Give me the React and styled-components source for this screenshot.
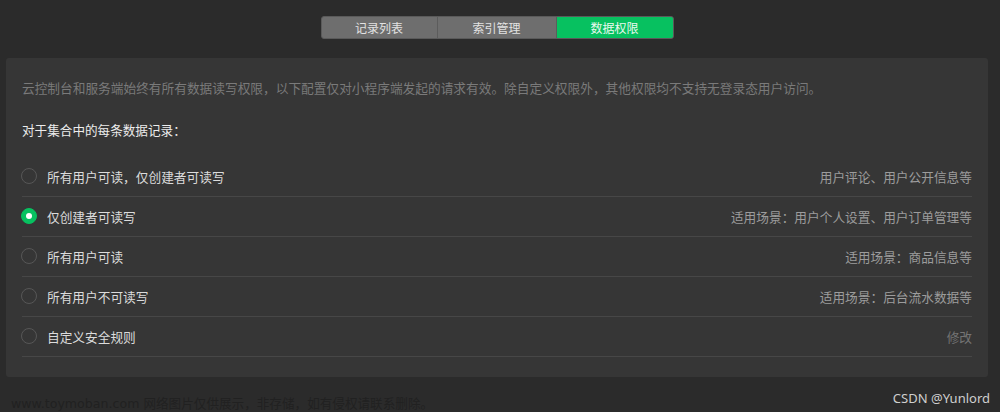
import React, { useState } from 'react'
import styled, { createGlobalStyle } from 'styled-components'

const GlobalStyle = createGlobalStyle`
  html, body {
    margin: 0;
    padding: 0;
    background: #2b2b2b;
  }
  body {
    font-family: "Noto Sans CJK SC", "Noto Sans", sans-serif;
  }
`

const Page = styled.div`
  width: 1000px;
  height: 412px;
  box-sizing: border-box;
  padding: 16px 12px 0 6px;
  display: flex;
  flex-direction: column;
  align-items: center;
  overflow: hidden;
`

const Tabs = styled.div`
  display: flex;
  height: 23px;
  box-sizing: border-box;
  border: 1px solid #5a5a5a;
  border-radius: 3px;
  background: #6e6e6e;
  overflow: hidden;
`

const Tab = styled.div`
  width: ${(props) => props.width}px;
  display: flex;
  align-items: center;
  justify-content: center;
  font-size: 12px;
  color: ${(props) => (props.active ? '#e9f9ef' : '#e2e2e2')};
  background: ${(props) => (props.active ? '#07c160' : 'transparent')};
  & + & {
    border-left: 1px solid #5c5c5c;
  }
`

const Panel = styled.div`
  align-self: stretch;
  margin-top: 19px;
  background: #363636;
  border-radius: 3px;
  padding: 20px 16px 20px 16px;
`

const Notice = styled.p`
  margin: 0;
  font-size: 12.7px;
  line-height: 20px;
  color: #7a7a7a;
`

const Heading = styled.h4`
  margin: 22px 0 17px;
  font-size: 12.6px;
  line-height: 20px;
  font-weight: normal;
  color: #ececec;
`

const Row = styled.label`
  height: 40px;
  box-sizing: border-box;
  border-bottom: 1px solid #474747;
  display: flex;
  align-items: center;
  padding-bottom: 1px;
  cursor: pointer;
`

const Radio = styled.span`
  width: 16px;
  height: 16px;
  box-sizing: border-box;
  border-radius: 50%;
  margin-left: -1px;
  border: 1px solid ${(props) => (props.checked ? '#07c160' : '#575757')};
  background: ${(props) => (props.checked ? '#07c160' : 'transparent')};
  display: flex;
  align-items: center;
  justify-content: center;
  &::after {
    content: '';
    width: 6px;
    height: 6px;
    border-radius: 50%;
    background: #fff;
    display: ${(props) => (props.checked ? 'block' : 'none')};
  }
`

const Label = styled.span`
  margin-left: 10px;
  flex: 1;
  font-size: 12.7px;
  color: #dcdcdc;
`

const Hint = styled.span`
  font-size: 12.7px;
  color: ${(props) => (props.link ? '#747474' : '#9c9c9c')};
`

const Footer = styled.div`
  align-self: stretch;
  display: flex;
  justify-content: space-between;
  margin: 11px -2px 0 5px;
`

const Watermark = styled.span`
  margin-top: 5px;
  font-family: "DejaVu Sans", "Noto Sans CJK SC", sans-serif;
  font-size: 12.6px;
  color: #212121;
`

const Credit = styled.span`
  font-family: "Noto Sans", "Open Sans", sans-serif;
  font-size: 13px;
  line-height: 20px;
  color: #cfcfcf;
`

const tabs = [
  { name: '记录列表', width: 115 },
  { name: '索引管理', width: 118 },
  { name: '数据权限', width: 116 },
]

const options = [
  { label: '所有用户可读，仅创建者可读写', hint: '用户评论、用户公开信息等' },
  { label: '仅创建者可读写', hint: '适用场景：用户个人设置、用户订单管理等' },
  { label: '所有用户可读', hint: '适用场景：商品信息等' },
  { label: '所有用户不可读写', hint: '适用场景：后台流水数据等' },
  { label: '自定义安全规则', hint: '修改', link: true },
]

export default function App() {
  const [selected, setSelected] = useState(1)
  return (
    <>
      <GlobalStyle />
      <Page>
        <Tabs>
          {tabs.map((t, i) => (
            <Tab key={t.name} width={t.width} active={i === 2}>
              {t.name}
            </Tab>
          ))}
        </Tabs>
        <Panel>
          <Notice>
            云控制台和服务端始终有所有数据读写权限，以下配置仅对小程序端发起的请求有效。除自定义权限外，其他权限均不支持无登录态用户访问。
          </Notice>
          <Heading>对于集合中的每条数据记录：</Heading>
          {options.map((o, i) => (
            <Row key={o.label} onClick={() => setSelected(i)}>
              <Radio checked={selected === i} />
              <Label>{o.label}</Label>
              <Hint link={o.link}>{o.hint}</Hint>
            </Row>
          ))}
        </Panel>
        <Footer>
          <Watermark>www.toymoban.com 网络图片仅供展示，非存储，如有侵权请联系删除。</Watermark>
          <Credit>CSDN @Yunlord</Credit>
        </Footer>
      </Page>
    </>
  )
}
